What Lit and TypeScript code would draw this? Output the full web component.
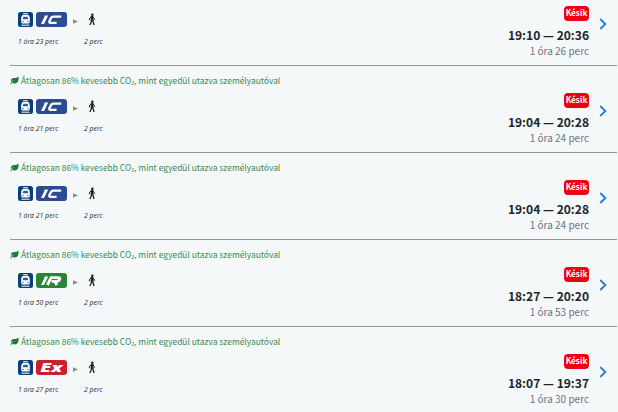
import { LitElement, html, svg, css, nothing } from 'lit';
import { customElement, property } from 'lit/decorators.js';

type Train = 'IC' | 'IR' | 'Ex';

interface Trip {
  train: Train;
  ride: string;
  walk: string;
  time: string;
  total: string;
  eco?: string;
}

const ECO = 'Átlagosan 86% kevesebb CO₂, mint egyedül utazva személyautóval';

const TRIPS: Trip[] = [
  { train: 'IC', ride: '1 óra 23 perc', walk: '2 perc', time: '19:10 — 20:36', total: '1 óra 26 perc' },
  { train: 'IC', ride: '1 óra 21 perc', walk: '2 perc', time: '19:04 — 20:28', total: '1 óra 24 perc', eco: ECO },
  { train: 'IC', ride: '1 óra 21 perc', walk: '2 perc', time: '19:04 — 20:28', total: '1 óra 24 perc', eco: ECO },
  { train: 'IR', ride: '1 óra 50 perc', walk: '2 perc', time: '18:27 — 20:20', total: '1 óra 53 perc', eco: ECO },
  { train: 'Ex', ride: '1 óra 27 perc', walk: '2 perc', time: '18:07 — 19:37', total: '1 óra 30 perc', eco: ECO },
];

const COLORS: Record<Train, string> = {
  IC: '#2b4c93',
  IR: '#2c8437',
  Ex: '#c8202e',
};

// slanted line logos, drawn in a 31x15 box
const LOGOS = {
  IC: svg`
    <path d="M8.6 3.4H12.2L8 12H5L8.2 5.4Z" fill="#fff" />
    <path d="M25.2 4.6H17.4Q15.8 4.6 15 6.1L13.6 8.8Q12.6 10.9 14.8 10.9H20.6"
      fill="none" stroke="#fff" stroke-width="2.4" />`,
  IR: svg`
    <path d="M8.6 3.4H12.2L8 12H5L8.2 5.4Z" fill="#fff" />
    <path d="M11.4 12 15.1 4.6H21.8Q24.6 4.6 23.6 6.5T20.4 8.3H15.6M18.8 8.3 20.8 12"
      fill="none" stroke="#fff" stroke-width="2.8" />`,
  Ex: svg`
    <text x="4.2" y="12" textLength="22" lengthAdjust="spacingAndGlyphs">Ex</text>`,
};

@customElement('trip-row')
export class TripRow extends LitElement {
  @property({ attribute: false }) trip!: Trip;

  static styles = css`
    :host {
      display: flex;
      flex-direction: column;
      justify-content: flex-end;
      box-sizing: border-box;
      height: 87px;
      border-bottom: 1px solid #92989c;
    }

    svg {
      display: block;
      flex: none;
    }

    .eco {
      display: flex;
      align-items: center;
      gap: 2px;
      height: 14px;
      margin-bottom: 1px;
      font-size: 8.43px;
      line-height: 14px;
      color: #358a4d;
      white-space: nowrap;
    }

    .body {
      display: flex;
      justify-content: space-between;
      height: 64px;
    }

    .legs {
      display: flex;
      padding: 11px 0 0 8px;
    }

    .leg {
      display: flex;
      flex-direction: column;
      gap: 9px;
      width: 49px;
    }

    .icons {
      display: flex;
      align-items: center;
      gap: 3px;
      height: 15px;
    }

    .logo text {
      font: italic 800 12px 'Open Sans', sans-serif;
      fill: #fff;
    }

    .arrow {
      width: 17px;
      padding-top: 7px;
      box-sizing: border-box;
    }

    .arrow svg {
      margin-left: 6px;
    }

    .walk {
      width: 20px;
    }

    .walk .icons {
      padding-left: 4px;
    }

    .mins {
      font: italic 6.85px/11px 'Open Sans', sans-serif;
      color: #25292c;
      white-space: nowrap;
    }

    .right {
      display: flex;
      gap: 10px;
      padding: 5px 10px 0 0;
    }

    .info {
      display: flex;
      flex-direction: column;
      align-items: flex-end;
      white-space: nowrap;
    }

    .late {
      width: 25px;
      height: 15px;
      border-radius: 4px;
      background: #ee0010;
      color: #fff;
      font-size: 8.2px;
      font-weight: 700;
      line-height: 13px;
      text-align: center;
    }

    .time {
      margin-top: 5px;
      font-size: 12.05px;
      font-weight: 700;
      line-height: 17px;
      color: #212529;
    }

    .total {
      font-size: 10px;
      line-height: 15px;
      color: #6c757d;
    }

    .chevron {
      margin-top: 12px;
    }
  `;

  render() {
    const { train, ride, walk, time, total, eco } = this.trip;
    return html`
      ${eco
        ? html`
          <div class="eco">
            <svg width="9" height="9" viewBox="0 0 9 9">
              <path d="M8.3.4C9.3 4.4 7.8 7.6 4.6 7.4 3.5 7.4 2.7 7 2.2 6.5L.8 8.6.2 8.2C1 6.4 2.4 5 4.5 4.3 2.8 4.4 1.8 5 1 6 .5 3.6 2 2.2 4.2 2.1 6 2 7.4 1.7 8.3.4Z" fill="#1c7c34" />
            </svg>
            <span>${eco}</span>
          </div>`
        : nothing}
      <div class="body">
        <div class="legs">
          <div class="leg">
            <div class="icons">
              <svg width="15" height="15" viewBox="0 0 15 15">
                <rect width="15" height="15" rx="2.5" fill="#0b3f7c" />
                <path d="M5.2 1.6H9.8" stroke="#fff" stroke-width=".9" />
                <path d="M5 2.8H10Q11.6 3.6 11.8 6V10Q11.8 11.6 10.2 11.6H4.8Q3.2 11.6 3.2 10V6Q3.4 3.6 5 2.8Z" fill="#fff" />
                <path d="M5.3 4.8H9.7L10.3 7.3H4.7Z" fill="#2d5f97" />
                <circle cx="5" cy="9.6" r=".7" fill="#0b3f7c" />
                <circle cx="10" cy="9.6" r=".7" fill="#0b3f7c" />
                <path d="M3.4 13.2H11.6" stroke="#fff" stroke-width="1" />
              </svg>
              <svg class="logo" width="31" height="15" viewBox="0 0 31 15">
                <rect width="31" height="15" rx="3" fill=${COLORS[train]} />
                ${LOGOS[train]}
              </svg>
            </div>
            <div class="mins">${ride}</div>
          </div>
          <div class="arrow">
            <svg width="5" height="5" viewBox="0 0 5 5"><path d="M0 .2 5 2.5 0 4.8Z" fill="#888d91" /></svg>
          </div>
          <div class="leg walk">
            <div class="icons">
              <svg width="8" height="13" viewBox="0 0 8 13">
                <circle cx="4.3" cy="1.7" r="1.3" fill="#222" />
                <path d="M2.8 3.1H5.3L5.6 7.7H2.7Z" fill="#222" />
                <path d="M3.2 3.8 1.6 5.2 1.3 7.2M5 3.8 6.1 5.7 7.2 6.7" fill="none" stroke="#222" stroke-width="1" />
                <path d="M3.6 7.2 3.2 9.3 1.8 12M4.6 7.2 5.3 9.3 6 12" fill="none" stroke="#222" stroke-width="1.3" />
              </svg>
            </div>
            <div class="mins">${walk}</div>
          </div>
        </div>
        <div class="right">
          <div class="info">
            <div class="late">Késik</div>
            <div class="time">${time}</div>
            <div class="total">${total}</div>
          </div>
          <svg class="chevron" width="8" height="12" viewBox="0 0 8 12">
            <path d="M1.2 1 6.4 6 1.2 11" fill="none" stroke="#2878d8" stroke-width="1.8" />
          </svg>
        </div>
      </div>
    `;
  }
}

@customElement('app-root')
export class AppRoot extends LitElement {
  static styles = css`
    :host {
      display: block;
      box-sizing: border-box;
      width: 618px;
      height: 412px;
      overflow: hidden;
      background: #f5f8f9;
      font-family: 'Noto Sans CJK JP', 'Open Sans', sans-serif;
    }

    /* the list starts slightly above the visible area */
    .list {
      margin: -21px 1px 0 10px;
    }
  `;

  render() {
    return html`
      <div class="list">
        ${TRIPS.map((trip) => html`<trip-row .trip=${trip}></trip-row>`)}
      </div>
    `;
  }
}
